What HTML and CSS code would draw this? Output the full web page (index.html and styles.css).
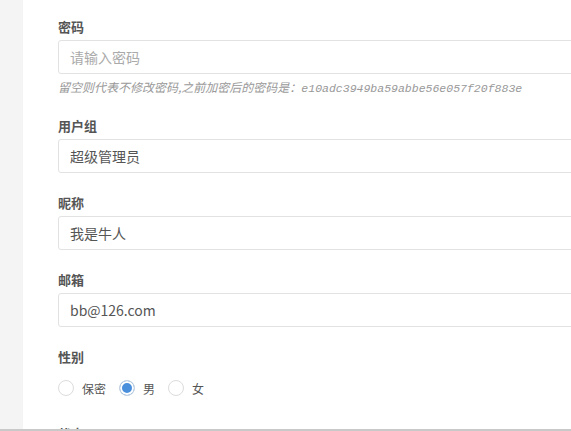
FILE: index.html
```html
<!DOCTYPE html>
<html lang="zh-CN">
<head>
<meta charset="utf-8">
<title>编辑用户</title>
<link rel="stylesheet" href="styles.css">
</head>
<body>
<div class="frame">
  <aside class="side"></aside>
  <main class="main">
    <div class="group">
      <div class="label">密码</div>
      <div class="input placeholder">请输入密码</div>
      <div class="hint">留空则代表不修改密码,之前加密后的密码是：<span class="hash">e10adc3949ba59abbe56e057f20f883e</span></div>
    </div>
    <div class="group">
      <div class="label">用户组</div>
      <div class="input">超级管理员</div>
    </div>
    <div class="group">
      <div class="label">昵称</div>
      <div class="input">我是牛人</div>
    </div>
    <div class="group">
      <div class="label">邮箱</div>
      <div class="input">bb@126.com</div>
    </div>
    <div class="group group-radio">
      <div class="label">性别</div>
      <div class="radios">
        <span class="radio"><span class="dot"></span>保密</span>
        <span class="radio"><span class="dot on"></span>男</span>
        <span class="radio"><span class="dot"></span>女</span>
      </div>
    </div>
    <div class="group">
      <div class="label">状态</div>
    </div>
  </main>
</div>
</body>
</html>
```
FILE: styles.css
```css
html, body {
  margin: 0;
  padding: 0;
  background: #fff;
}
body {
  font-family: "Noto Sans CJK SC", "Liberation Sans", sans-serif;
  color: #555;
}
.frame {
  display: flex;
  height: 429px;
  overflow: hidden;
  border-bottom: 2px solid #c9c9c9;
}
.side {
  width: 23px;
  flex: none;
  background: #f4f4f4;
}
.main {
  flex: 1;
  padding: 17px 0 0 35px;
  overflow: hidden;
}
.group {
  margin-bottom: 20px;
}
.group-radio {
  margin-bottom: 26px;
}
.label {
  font-size: 13px;
  font-weight: bold;
  line-height: 20px;
  color: #555;
  margin-bottom: 3px;
}
.input {
  width: 600px;
  height: 34px;
  box-sizing: border-box;
  border: 1px solid #e2e2e2;
  border-radius: 3px;
  padding: 0 11px;
  font-size: 14px;
  line-height: 32px;
  color: #555;
}
.input.placeholder {
  color: #aaa;
}
.hint {
  margin-top: 4px;
  height: 18px;
  font-size: 12px;
  line-height: 18px;
  font-style: italic;
  color: #999;
  white-space: nowrap;
  overflow: hidden;
}
.hash {
  font-family: "Liberation Mono", monospace;
  font-size: 11.5px;
  line-height: 1;
}
.radios {
  display: flex;
  align-items: center;
  gap: 13px;
  margin-top: 11px;
  height: 20px;
}
.radio {
  display: flex;
  align-items: center;
  gap: 8px;
  font-size: 12px;
  color: #555;
}
.dot {
  width: 16px;
  height: 16px;
  box-sizing: border-box;
  border: 1px solid #dcdcdc;
  border-radius: 50%;
  background: #fff;
}
.dot.on {
  background: #4a8fdc;
  border-color: #c8d3e0;
  box-shadow: inset 0 0 0 2px #fff;
}
```
